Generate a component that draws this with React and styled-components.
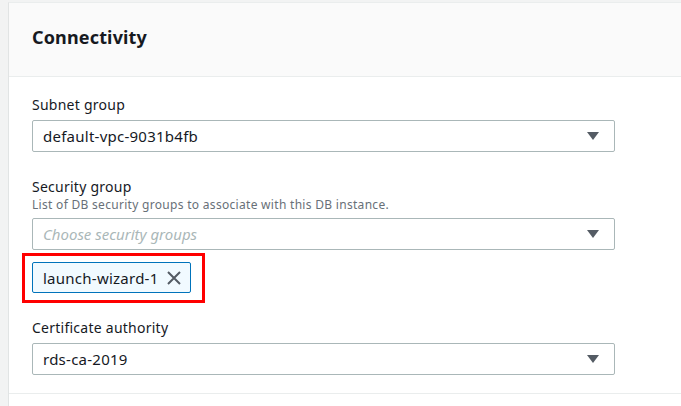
import React from 'react';
import styled, { createGlobalStyle } from 'styled-components';

const GlobalStyle = createGlobalStyle`
  html, body {
    margin: 0;
    padding: 0;
    background: #f2f3f3;
    overflow: hidden;
  }
  body {
    font-family: "Noto Sans", "Open Sans", Arial, sans-serif;
    color: #16191f;
  }
`;

const Page = styled.div`
  padding: 2px 0 0 8px;
`;

const Card = styled.section`
  width: 700px;
  background: #fff;
  border-left: 1px solid #e1e4e4;
  border-top: 1px solid #eaeded;
`;

const Header = styled.header`
  background: #fafafa;
  border-bottom: 1px solid #eaeded;
  padding: 23px 23px 28px;
  height: 22px;
`;

const Title = styled.h2`
  margin: 0;
  font-size: 18px;
  line-height: 22px;
  font-weight: 700;
  letter-spacing: 0.15px;
`;

const Body = styled.div`
  padding: 18px 23px 16px;
  border-bottom: 1px solid #eaeded;
  height: 282px;
`;

const Section = styled.div`
  height: 30px;
`;

const Field = styled.div`
  display: flex;
  flex-direction: column;
  & + & {
    margin-top: 25px;
  }
`;

const Label = styled.label`
  font-size: 14px;
  line-height: 20px;
  letter-spacing: 0.25px;
  margin-bottom: ${(p) => (p.$hasDesc ? '0' : '5px')};
`;

const Description = styled.div`
  font-size: 12px;
  line-height: 16px;
  letter-spacing: 0.3px;
  color: #687078;
  margin-bottom: 5px;
`;

const Select = styled.div`
  box-sizing: border-box;
  width: 583px;
  height: 32px;
  border: 1px solid #aab7b8;
  border-radius: 2px;
  display: flex;
  align-items: center;
  justify-content: space-between;
  padding: 0 15px 0 10px;
  font-size: 15px;
  letter-spacing: ${(p) => (p.$placeholder ? '0' : '0.25px')};
  color: ${(p) => (p.$placeholder ? '#aab7b8' : '#16191f')};
  font-style: ${(p) => (p.$placeholder ? 'italic' : 'normal')};
`;

const Caret = styled.span`
  width: 0;
  height: 0;
  border-left: 6px solid transparent;
  border-right: 6px solid transparent;
  border-top: 8px solid #545b64;
`;

const Tokens = styled.div`
  position: relative;
  display: flex;
  margin-top: 12px;
`;

const Highlight = styled.div`
  position: absolute;
  left: -10px;
  top: -9px;
  width: 183px;
  height: 50px;
  box-sizing: border-box;
  border: 3px solid #ff0000;
  pointer-events: none;
`;

const Token = styled.div`
  box-sizing: border-box;
  height: 31px;
  width: 159px;
  display: flex;
  align-items: center;
  justify-content: space-between;
  padding: 0 8px 0 10px;
  background: #f1faff;
  border: 1px solid #0073bb;
  border-radius: 2px;
  font-size: 15px;
  letter-spacing: 0.25px;
`;

const Dismiss = styled.span`
  display: flex;
  color: #545b64;
`;

const App = () => (
  <Page>
    <GlobalStyle />
    <Card>
      <Header>
        <Title>Connectivity</Title>
      </Header>
      <Body>
        <Field>
          <Label>Subnet group</Label>
          <Select>
            default-vpc-9031b4fb
            <Caret />
          </Select>
        </Field>
        <Field>
          <Label $hasDesc>Security group</Label>
          <Description>List of DB security groups to associate with this DB instance.</Description>
          <Select $placeholder>
            Choose security groups
            <Caret />
          </Select>
          <Tokens>
            <Highlight />
            <Token>
              launch-wizard-1
              <Dismiss>
                <svg width="16" height="16" viewBox="0 0 16 16">
                  <path d="M2 2 L14 14 M14 2 L2 14" stroke="currentColor" strokeWidth="2" fill="none" />
                </svg>
              </Dismiss>
            </Token>
          </Tokens>
        </Field>
        <Field>
          <Label>Certificate authority</Label>
          <Select>
            rds-ca-2019
            <Caret />
          </Select>
        </Field>
      </Body>
      <Section />
    </Card>
  </Page>
);

export default App;
